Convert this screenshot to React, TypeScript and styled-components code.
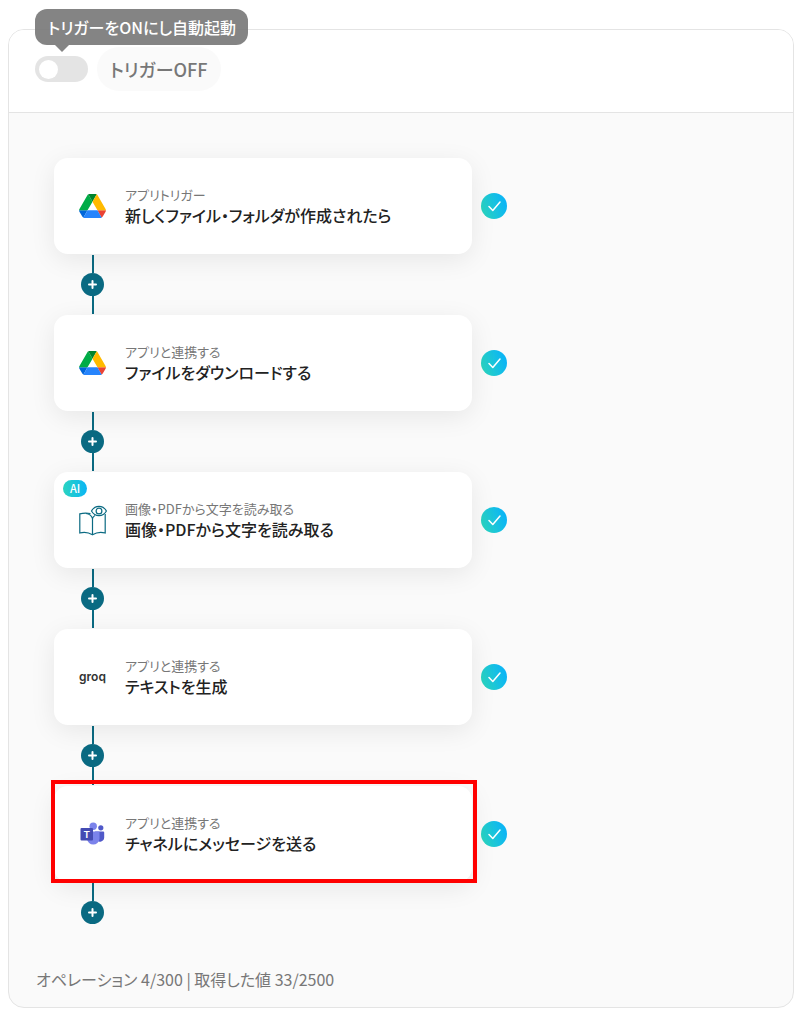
import React from "react";
import styled, { createGlobalStyle } from "styled-components";

const GlobalStyle = createGlobalStyle`
  *, *::before, *::after { box-sizing: border-box; }
  body {
    margin: 0;
    background: #fff;
    color: #222;
    font-family: "Noto Sans CJK JP", sans-serif;
    font-feature-settings: "palt";
  }
  button, input { font: inherit; }
`;

const Page = styled.main`
  padding: 29px 10px 11px 8px;
`;

const Panel = styled.section`
  border: 1px solid #e4e4e4;
  border-radius: 16px;
  background: #fafafa;
`;

const Header = styled.header`
  display: flex;
  align-items: center;
  gap: 9px;
  height: 83px;
  padding: 0 26px 4px;
  border-bottom: 1px solid #e4e4e4;
  border-radius: 15px 15px 0 0;
  background: #fff;
`;

const SwitchWrap = styled.div`
  position: relative;
  display: flex;
`;

const Switch = styled.input`
  appearance: none;
  display: flex;
  align-items: center;
  width: 53px;
  height: 26px;
  margin: 0;
  padding: 0 4px;
  border-radius: 13px;
  background: #e4e4e4;
  cursor: pointer;

  &::before {
    content: "";
    width: 19px;
    height: 19px;
    border-radius: 50%;
    background: #fff;
  }
  &:checked { background: #2ad4c0; justify-content: flex-end; }
`;

const Tooltip = styled.span`
  position: absolute;
  left: 0;
  bottom: 37px;
  padding: 0 12px 0 13px;
  border-radius: 12px;
  background: rgba(119, 119, 119, 0.9);
  color: #fff;
  font-size: 16px;
  font-weight: 500;
  line-height: 36px;
  white-space: nowrap;

  &::after {
    content: "";
    position: absolute;
    left: 20px;
    top: 100%;
    border: 7px solid transparent;
    border-top-color: rgba(119, 119, 119, 0.9);
    border-bottom: 0;
  }
`;

const StatusPill = styled.label`
  padding: 0 14px 0 13px;
  border-radius: 22px;
  background: #fafafa;
  color: #777;
  font-size: 18px;
  font-weight: 500;
  line-height: 44px;
`;

const Flow = styled.ol`
  margin: 0;
  padding: 45px 45px 0;
  list-style: none;
`;

const StepRow = styled.div`
  display: flex;
  align-items: center;
  gap: 9px;
`;

const Card = styled.article<{ $selected?: boolean }>`
  position: relative;
  display: flex;
  align-items: center;
  gap: 18px;
  width: 418px;
  height: 96px;
  padding: 0 24px;
  border-radius: 14px;
  background: #fff;
  box-shadow: 0 6px 26px rgba(0, 0, 0, 0.08);

  &::after {
    content: "";
    display: ${(p) => (p.$selected ? "block" : "none")};
    position: absolute;
    inset: -6px -5px -1px -3px;
    border: 4px solid #f00;
  }
`;

const IconSlot = styled.div`
  display: flex;
  align-items: center;
  justify-content: center;
  width: 29px;
  flex: none;
`;

const Kind = styled.p`
  margin: 0;
  color: #777;
  font-size: 13px;
  line-height: 18px;
`;

const Title = styled.h2`
  margin: 0;
  color: #222;
  font-size: 16px;
  font-weight: 500;
  line-height: 22px;
`;

const AiBadge = styled.span`
  position: absolute;
  left: 9px;
  top: 8px;
  width: 24px;
  border-radius: 9px;
  background: linear-gradient(90deg, #2ad4c0, #0bb5f5);
  color: #fff;
  font-size: 11px;
  font-weight: 500;
  line-height: 17px;
  text-align: center;
`;

const Wordmark = styled.span`
  color: #333;
  font-family: Inter, sans-serif;
  font-size: 12px;
  font-weight: 600;
  line-height: 20px;
`;

const Done = styled.span`
  display: flex;
  align-items: center;
  justify-content: center;
  width: 26px;
  height: 26px;
  border-radius: 50%;
  background: linear-gradient(70deg, #2ad4c0 10%, #0bb5f5 85%);
`;

const Connector = styled.div<{ $last?: boolean }>`
  display: flex;
  flex-direction: column;
  align-items: center;
  width: 23px;
  height: ${(p) => (p.$last ? "42px" : "61px")};
  margin-left: 27px;
  padding: ${(p) => (p.$last ? "1px 0 0" : "1px 0")};
`;

const Line = styled.span`
  flex: 1;
  width: 2px;
  background: #0a6a82;
`;

const AddButton = styled.button`
  display: flex;
  align-items: center;
  justify-content: center;
  width: 23px;
  height: 23px;
  padding: 0;
  border: 0;
  border-radius: 50%;
  background: #0a6a82;
  cursor: pointer;
`;

const Footer = styled.footer`
  padding: 43px 27px 16px;
  color: #777;
  font-size: 16px;
  line-height: 24px;
`;

const DriveIcon = () => (
  <svg width="27" height="24" viewBox="0 0 87.3 78" aria-hidden="true">
    <path d="m6.6 66.85 3.85 6.65c.8 1.4 1.95 2.5 3.3 3.3l13.75-23.8h-27.5c0 1.55.4 3.1 1.2 4.5z" fill="#0066da" />
    <path d="m43.65 25-13.75-23.8c-1.35.8-2.5 1.9-3.3 3.3l-25.4 44a9.06 9.06 0 0 0 -1.2 4.5h27.5z" fill="#00ac47" />
    <path d="m73.55 76.8c1.35-.8 2.5-1.9 3.3-3.3l1.6-2.75 7.65-13.25c.8-1.4 1.2-2.95 1.2-4.5h-27.502l5.852 11.5z" fill="#ea4335" />
    <path d="m43.65 25 13.75-23.8c-1.35-.8-2.9-1.2-4.5-1.2h-18.5c-1.6 0-3.15.45-4.5 1.2z" fill="#00832d" />
    <path d="m59.8 53h-32.3l-13.75 23.8c1.35.8 2.9 1.2 4.5 1.2h50.8c1.6 0 3.15-.45 4.5-1.2z" fill="#2684fc" />
    <path d="m73.4 26.5-12.7-22c-.8-1.4-1.95-2.5-3.3-3.3l-13.75 23.8 16.15 28h27.45c0-1.55-.4-3.1-1.2-4.5z" fill="#ffba00" />
  </svg>
);

const ReadIcon = () => (
  <svg width="29" height="31" viewBox="0 0 29 31" fill="none" stroke="#0a6a82" strokeWidth="1.2" aria-hidden="true">
    <path d="M12.500 8.500C9 8 5 8 1.800 8.800V28C6 26.800 10.500 27.300 14.500 29.800C18.500 27.300 23 26.800 27.200 28V9" />
    <path d="M14.500 29.500V13.500C13.800 11 11 9 8 8.500M14.500 13.500C15 12 15.700 11.200 17 10.500" />
    <path d="M13.500 6C17 -.2 25 -.2 28.400 6C25 12.200 17 12.200 13.500 6Z" />
    <circle cx="21" cy="6" r="2.900" />
  </svg>
);

const TeamsIcon = () => (
  <svg width="25" height="24" viewBox="0 0 25 24" aria-hidden="true">
    <circle cx="20.800" cy="5.800" r="2.600" fill="#5059c9" />
    <path d="M15 9.500H23.200A1 1 0 0 1 24.200 10.500V15.500A4.300 4.300 0 0 1 16.500 18Z" fill="#5059c9" />
    <circle cx="13.200" cy="4.300" r="3.700" fill="#7b83eb" />
    <path d="M7.500 9.500H18.500A1 1 0 0 1 19.500 10.500V17A6.300 6.300 0 0 1 7 17Z" fill="#7b83eb" />
    <rect x="0.500" y="6" width="12.500" height="12.500" rx="1" fill="#444bb3" />
    <text x="6.750" y="15.900" textAnchor="middle" fill="#fff" fontFamily="Lato, sans-serif" fontSize="10" fontWeight="700">T</text>
  </svg>
);

const CheckIcon = () => (
  <svg width="13" height="11" viewBox="0 0 13 11" fill="none" stroke="#fff" strokeWidth="1.5" strokeLinecap="round" strokeLinejoin="round" aria-hidden="true">
    <path d="M1 5.500L4.800 9.500L12 1" />
  </svg>
);

const PlusIcon = () => (
  <svg width="9" height="9" viewBox="0 0 9 9" stroke="#fff" strokeWidth="2" strokeLinecap="round" aria-hidden="true">
    <path d="M4.500 1V8M1 4.500H8" />
  </svg>
);

type Step = {
  kind: string;
  title: string;
  icon: React.ReactNode;
  ai?: boolean;
  selected?: boolean;
};

const steps: Step[] = [
  { kind: "アプリトリガー", title: "新しくファイル・フォルダが作成されたら", icon: <DriveIcon /> },
  { kind: "アプリと連携する", title: "ファイルをダウンロードする", icon: <DriveIcon /> },
  { kind: "画像・PDFから文字を読み取る", title: "画像・PDFから文字を読み取る", icon: <ReadIcon />, ai: true },
  { kind: "アプリと連携する", title: "テキストを生成", icon: <Wordmark>groq</Wordmark> },
  { kind: "アプリと連携する", title: "チャネルにメッセージを送る", icon: <TeamsIcon />, selected: true },
];

export default function App() {
  return (
    <>
      <GlobalStyle />
      <Page>
        <Panel>
          <Header>
            <SwitchWrap>
              <Switch type="checkbox" role="switch" id="trigger" />
              <Tooltip role="tooltip">トリガーをONにし自動起動</Tooltip>
            </SwitchWrap>
            <StatusPill htmlFor="trigger">トリガーOFF</StatusPill>
          </Header>
          <Flow>
            {steps.map((step, i) => {
              const last = i === steps.length - 1;
              return (
                <li key={step.title}>
                  <StepRow>
                    <Card $selected={step.selected}>
                      {step.ai && <AiBadge>AI</AiBadge>}
                      <IconSlot>{step.icon}</IconSlot>
                      <div>
                        <Kind>{step.kind}</Kind>
                        <Title>{step.title}</Title>
                      </div>
                    </Card>
                    <Done>
                      <CheckIcon />
                    </Done>
                  </StepRow>
                  <Connector $last={last}>
                    <Line />
                    <AddButton type="button">
                      <PlusIcon />
                    </AddButton>
                    {!last && <Line />}
                  </Connector>
                </li>
              );
            })}
          </Flow>
          <Footer>オペレーション 4/300 | 取得した値 33/2500</Footer>
        </Panel>
      </Page>
    </>
  );
}
